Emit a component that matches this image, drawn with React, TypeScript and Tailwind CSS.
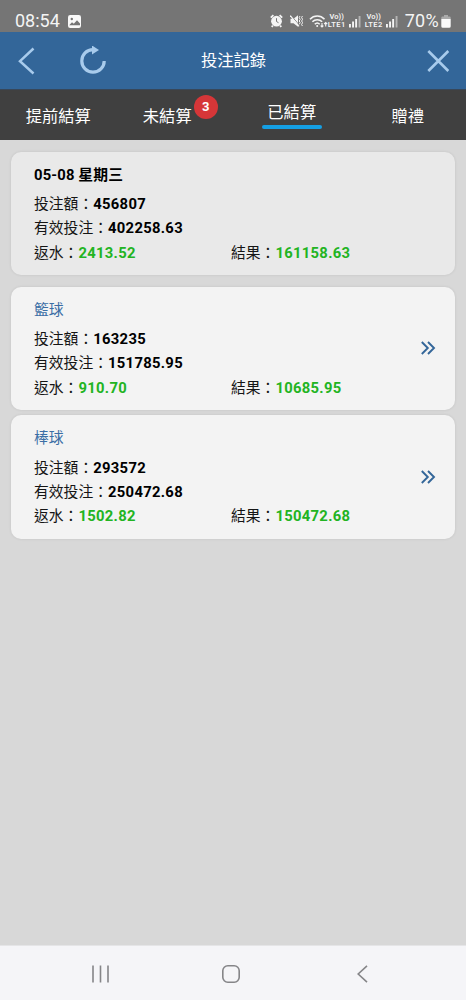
import { clsx } from "clsx";

// ─── Constants ────────────────────────────────────────────────────────────────

const TABS = [
  { id: "early", label: "提前結算" },
  { id: "open", label: "未結算", badge: 3 },
  { id: "settled", label: "已結算", active: true },
  { id: "gift", label: "贈禮" },
];

type Bet = { title: string; amount: string; valid: string; rebate: string; result: string };

const SUMMARY: Bet = { title: "05-08 星期三", amount: "456807", valid: "402258.63", rebate: "2413.52", result: "161158.63" };

const SPORTS: Bet[] = [
  { title: "籃球", amount: "163235", valid: "151785.95", rebate: "910.70", result: "10685.95" },
  { title: "棒球", amount: "293572", valid: "250472.68", rebate: "1502.82", result: "150472.68" },
];

// ─── Status Bar ───────────────────────────────────────────────────────────────

function Signal() {
  return (
    <svg width="12" height="13" viewBox="0 0 12 13" fill="#f4f4f4">
      <rect x="0" y="9" width="1.9" height="3.5" />
      <rect x="3.1" y="6.5" width="1.9" height="6" />
      <rect x="6.2" y="4" width="1.9" height="8.5" />
      <rect x="9.6" y="1" width="1.9" height="11.5" opacity="0.5" />
    </svg>
  );
}

function Lte({ slot }: { slot: number }) {
  return (
    <div className="flex w-[18px] flex-col items-center text-[7.5px] font-semibold leading-[8px]">
      <span>Vo))</span>
      <span className="tracking-[0.4px]">LTE{slot}</span>
    </div>
  );
}

function StatusBar() {
  return (
    <div className="flex h-8 shrink-0 items-center bg-[#757575] pl-[15px] pr-[15px] pt-[10px] text-[#f4f4f4]">
      <span className="text-[18px] leading-5">08:54</span>
      <svg className="ml-[8px]" width="13" height="13" viewBox="0 0 13 13">
        <rect width="13" height="13" rx="2.2" fill="#f8f8f8" />
        <circle cx="3.8" cy="4" r="1.2" fill="#757575" />
        <path d="M1.2 10.2 4 7.2l1.8 1.6L9 5.2l3 3.4v1.6z" fill="#757575" />
      </svg>
      <div className="ml-auto flex items-center">
        {/* Alarm */}
        <svg width="13" height="14" viewBox="0 0 13 14">
          <circle cx="6.5" cy="7.2" r="5.4" fill="#f4f4f4" />
          <path d="M.8 3.6 3.4 1.2M12.2 3.6 9.6 1.2M2.8 11.5 1.8 13M10.2 11.5l1 1.5" stroke="#f4f4f4" strokeWidth="1.8" />
          <path d="M6.5 4.2v3.3l2 1.2" stroke="#757575" strokeWidth="1" fill="none" />
        </svg>
        {/* Muted, vibrating speaker */}
        <svg className="ml-[7px]" width="13" height="14" viewBox="0 0 13 14">
          <path d="M.5 4.7h3L8 1.2v11.6L3.5 9.3h-3z" fill="#f4f4f4" />
          <path d="M1 1.2 9.5 11.6" stroke="#757575" strokeWidth="1" />
          <path d="M.3 1.6 9 12.3" stroke="#f4f4f4" strokeWidth="1.2" />
          <path d="m10 2-.8 1.7 1 1.6-1 1.7 1 1.7-1 1.7M12.4 2l-.8 1.7 1 1.6-1 1.7 1 1.7-1 1.7.8 1.6" stroke="#f4f4f4" strokeWidth="1" fill="none" />
        </svg>
        <svg className="ml-[6px]" width="19" height="14" viewBox="0 0 19 14" fill="none" stroke="#f4f4f4">
          <path d="M1 5.2c4-4.3 10.5-4.3 14.5 0M3.4 7.8c2.7-2.8 7-2.8 9.7 0M5.8 10.2c1.4-1.4 3.5-1.4 4.9 0" strokeWidth="1.6" />
          <circle cx="8.2" cy="12" r="1" fill="#f4f4f4" stroke="none" />
          <path d="M13 9v4M11.6 11.6 13 13l1.4-1.4M16.7 12.5v-4M15.2 10l1.5-1.5L18.2 10" strokeWidth="1.1" />
        </svg>
        <Lte slot={1} />
        <div className="ml-[3px]"><Signal /></div>
        <div className="ml-[4px]"><Lte slot={2} /></div>
        <div className="ml-[3px]"><Signal /></div>
        <span className="ml-[7px] text-[18px] leading-5 tracking-[0.3px]">70%</span>
        <svg className="ml-[2px]" width="10" height="13" viewBox="0 0 10 13">
          <path d="M3 0h4v1.5h1.5A1.2 1.2 0 0 1 9.7 2.7V4H.3V2.7a1.2 1.2 0 0 1 1.2-1.2H3z" fill="#aaa" />
          <path d="M.3 4h9.4v7.3a1.5 1.5 0 0 1-1.5 1.5H1.8a1.5 1.5 0 0 1-1.5-1.5z" fill="#fafafa" />
        </svg>
      </div>
    </div>
  );
}

// ─── Header ───────────────────────────────────────────────────────────────────

function Header() {
  return (
    <header className="grid h-[57px] shrink-0 grid-cols-3 items-center bg-[#336699] pl-[18px] pr-[17px] text-[#a8cbec]">
      <div className="flex items-center gap-[43px]">
        <svg width="18" height="28" viewBox="0 0 18 28" fill="none" stroke="currentColor" strokeWidth="2.5">
          <path d="M15.5 1.5 2 14.2l13.5 12.3" />
        </svg>
        <svg width="28" height="30" viewBox="0 0 28 30" fill="none">
          <path d="M16.3 3.7H14a11.2 11.2 0 1 0 11.2 11.2" stroke="currentColor" strokeWidth="3.2" />
          <path d="M13-.5 20 3.9l-7 4.7z" fill="currentColor" />
        </svg>
      </div>
      <h1 className="pt-0.5 text-center text-[16.3px] text-white">投注記錄</h1>
      <svg className="justify-self-end" width="22" height="22" viewBox="0 0 22 22" stroke="currentColor" strokeWidth="2.6">
        <path d="M1.3 1l20 20M21.3 1l-20 20" />
      </svg>
    </header>
  );
}

function Tabs() {
  return (
    <nav className="grid h-[51px] shrink-0 grid-cols-4 border-t border-[#37475a] bg-[#404040] text-[16.3px] leading-6 text-white">
      {TABS.map((tab) => (
        <div key={tab.id} className={clsx("flex justify-center", tab.active ? "pl-px pt-[11px]" : "pt-[15px]")}>
          {tab.active ? (
            <div className="flex flex-col items-center">
              <span>{tab.label}</span>
              <span className="h-1 w-[60px] rounded-full bg-[#159fe3]" />
            </div>
          ) : (
            <span className={clsx("relative", tab.badge && "mr-[15px]")}>
              {tab.label}
              {tab.badge && (
                <span className="absolute -top-[10px] left-[51px] flex size-6 items-center justify-center rounded-full bg-[#d63638] text-[13px] font-bold">
                  {tab.badge}
                </span>
              )}
            </span>
          )}
        </div>
      ))}
    </nav>
  );
}

// ─── Bet Card ─────────────────────────────────────────────────────────────────

function Field({ label, value, green }: { label: string; value: string; green?: boolean }) {
  return (
    <p className="whitespace-nowrap">
      {label}：
      <b className={clsx("tracking-[0.3px]", green ? "text-[#22b422]" : "text-black")}>{value}</b>
    </p>
  );
}

function BetCard({ bet, summary }: { bet: Bet; summary?: boolean }) {
  return (
    <section
      className={clsx(
        "flex h-[123.5px] items-center rounded-[10px] pl-[23px] pr-[19px] text-[14.8px] leading-[24.3px] text-[#151515] shadow-[0_0_3px_rgba(0,0,0,0.1)]",
        summary ? "bg-[#e9e9e9]" : "bg-[#f3f3f3]",
      )}
    >
      <div className="flex-1 pt-[1.4px]">
        <h2 className={clsx("mb-[5px]", summary ? "font-bold tracking-[0.15px] text-black" : "text-[#3b6ea5]")}>{bet.title}</h2>
        <Field label="投注額" value={bet.amount} />
        <Field label="有效投注" value={bet.valid} />
        <div className="flex">
          <div className="w-[197px]">
            <Field label="返水" value={bet.rebate} green />
          </div>
          <Field label="結果" value={bet.result} green />
        </div>
      </div>
      {!summary && (
        <svg width="16" height="14" viewBox="0 0 16 14" fill="none" stroke="#336699" strokeWidth="1.9">
          <path d="M1.8 1l6 6-6 6M8 1l6 6-6 6" />
        </svg>
      )}
    </section>
  );
}

// ─── System Navigation ────────────────────────────────────────────────────────

function SystemNav() {
  return (
    <footer className="flex h-[55px] shrink-0 items-center border-t border-[#e5e5e7] bg-[#f5f5f8] pl-[92px] pt-[2px] text-[#858588]">
      <svg width="17" height="18" viewBox="0 0 17 18" stroke="currentColor" strokeWidth="1.6">
        <path d="M1 .5v17M8.5.5v17M16 .5v17" />
      </svg>
      <svg className="ml-[113px]" width="18" height="18" viewBox="0 0 18 18" fill="none" stroke="currentColor" strokeWidth="1.6">
        <rect x=".8" y=".8" width="16.4" height="16.4" rx="5" />
      </svg>
      <svg className="ml-[117px]" width="11" height="18" viewBox="0 0 11 18" fill="none" stroke="currentColor" strokeWidth="1.6">
        <path d="M10 .8 1.2 9l8.8 8.2" />
      </svg>
    </footer>
  );
}

// ─── Export ───────────────────────────────────────────────────────────────────

export default function App() {
  return (
    <div className="flex h-screen w-full flex-col overflow-hidden bg-[#d8d8d8] font-[Roboto,'Noto_Sans_CJK_TC',sans-serif]">
      <StatusBar />
      <Header />
      <Tabs />
      <main className="flex flex-1 flex-col px-[11px] pt-[11.5px]">
        <BetCard bet={SUMMARY} summary />
        <div className="mt-[11.5px] flex flex-col gap-[5px]">
          {SPORTS.map((bet) => (
            <BetCard key={bet.title} bet={bet} />
          ))}
        </div>
      </main>
      <SystemNav />
    </div>
  );
}
